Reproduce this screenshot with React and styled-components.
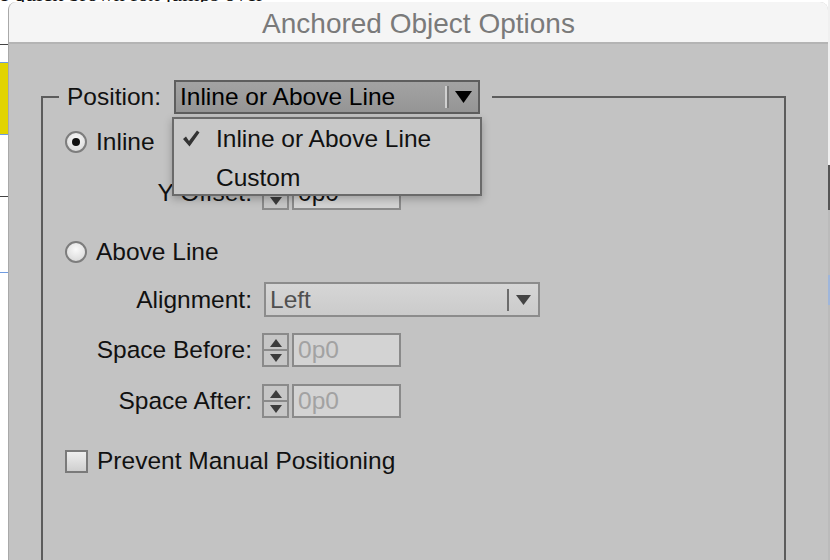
import React from 'react';
import styled, { createGlobalStyle } from 'styled-components';

const GlobalStyle = createGlobalStyle`
  html, body {
    margin: 0;
    padding: 0;
    background: #ffffff;
    overflow: hidden;
  }
  body {
    font-family: "Liberation Sans", Arial, sans-serif;
  }
`;

// Document behind the dialog
const Desktop = styled.div`
  position: relative;
  width: 830px;
  height: 560px;
  overflow: hidden;
  background: #ffffff;
`;

const DocText = styled.div`
  position: absolute;
  top: -19px;
  left: -12px;
  font-family: "Liberation Serif", "Times New Roman", serif;
  font-size: 22px;
  color: #111;
  white-space: nowrap;
`;

const DocSide = styled.div`
  position: absolute;
  left: -14px;
  top: 150px;
  font-family: "Liberation Serif", "Times New Roman", serif;
  font-size: 22px;
  color: #111;
`;

const Highlight = styled.div`
  position: absolute;
  left: 0;
  top: 62px;
  width: 8px;
  height: 71px;
  background: #e2d400;
  border-top: 1px solid #6f9be0;
  border-bottom: 1px solid #6f9be0;
`;

const GuideLine = styled.div`
  position: absolute;
  left: 0;
  top: ${(p) => p.$top}px;
  width: 8px;
  height: 1px;
  background: ${(p) => p.$color || '#6f9be0'};
`;

const RightEdge = styled.div`
  position: absolute;
  right: 0;
  top: 0;
  width: 2px;
  height: 560px;
  background: linear-gradient(#f0f0f0 0 165px, #555 165px 210px, #bbb 210px 275px, #9fb6db 275px 305px, #bbb 305px 560px);
`;

// Dialog window
const Window = styled.div`
  position: absolute;
  left: 8px;
  top: 2px;
  width: 820px;
  height: 600px;
  background: #c3c3c3;
  border-radius: 8px 8px 0 0;
  border-left: 1px solid #a9a9a9;
  box-sizing: border-box;
  overflow: hidden;
  display: flex;
  flex-direction: column;
`;

const TitleBar = styled.div`
  flex: none;
  box-sizing: border-box;
  height: 42px;
  background: #f5f5f5;
  border-bottom: 2px solid #b4b4b4;
  display: flex;
  align-items: center;
  justify-content: center;
  font-size: 28px;
  color: #7a7a7a;
  padding-top: 4px;
`;

const Body = styled.div`
  padding: 36px 0 0 32px;
`;

const Group = styled.fieldset`
  margin: 0;
  padding: 0;
  width: 745px;
  min-height: 520px;
  border: 2px solid #5c5c5c;
  box-sizing: border-box;
`;

const Legend = styled.legend`
  margin-left: 16px;
  padding: 0 12px 0 8px;
  display: flex;
  align-items: center;
  gap: 13px;
`;

const Label = styled.span`
  font-size: 24.5px;
  color: #111;
  white-space: nowrap;
`;

const SelectWrap = styled.div`
  position: relative;
`;

const Select = styled.div`
  width: ${(p) => p.$w}px;
  height: ${(p) => p.$h}px;
  box-sizing: border-box;
  border: 2px solid ${(p) => (p.$open ? '#5e5e5e' : '#8c8c8c')};
  background: ${(p) =>
    p.$open ? 'linear-gradient(#a3a3a3, #959595)' : 'linear-gradient(#d6d6d6, #cbcbcb)'};
  display: flex;
  align-items: center;
  padding-left: 4px;
  font-size: 24.5px;
  color: ${(p) => (p.$open ? '#000' : '#505050')};
`;

const SelectText = styled.span`
  flex: 1;
  white-space: nowrap;
`;

const Divider = styled.span`
  width: ${(p) => (p.$double ? 4 : 2)}px;
  height: 22px;
  border-left: 2px solid ${(p) => (p.$double ? '#d0d0d0' : '#6c6c6c')};
  border-right: ${(p) => (p.$double ? '2px solid #7a7a7a' : 'none')};
  box-sizing: border-box;
  margin-right: 6px;
`;

const Arrow = styled.svg`
  width: 17px;
  height: 12px;
  margin-right: 6px;
`;

const Menu = styled.div`
  position: absolute;
  left: -2px;
  top: 37px;
  width: 310px;
  height: 79px;
  box-sizing: border-box;
  background: #c8c8c8;
  border: 2px solid #6a6a6a;
  box-shadow: 0 3px 8px rgba(0, 0, 0, 0.25);
  z-index: 5;
`;

const MenuItem = styled.div`
  height: 39px;
  display: flex;
  align-items: center;
  font-size: 24.5px;
  color: #111;
`;

const CheckSlot = styled.span`
  width: 42px;
  display: flex;
  justify-content: flex-end;
  padding-right: 16px;
  box-sizing: border-box;
`;

const Content = styled.div`
  display: flex;
  flex-direction: column;
  padding-left: 22px;
`;

const OptionRow = styled.label`
  display: flex;
  align-items: center;
  gap: 9px;
  height: 28px;
  margin-top: ${(p) => p.$mt}px;
  font-size: 24.5px;
  color: #111;
`;

const Radio = styled.span`
  width: 22px;
  height: 22px;
  border-radius: 50%;
  box-sizing: border-box;
  border: 2px solid #7d7d7d;
  background: radial-gradient(circle at 50% 35%, #fafafa, #d4d4d4);
  display: flex;
  align-items: center;
  justify-content: center;
  &::after {
    content: '';
    width: 8px;
    height: 8px;
    border-radius: 50%;
    background: #111;
    display: ${(p) => (p.$checked ? 'block' : 'none')};
  }
`;

const Checkbox = styled.span`
  width: 23px;
  height: 23px;
  box-sizing: border-box;
  border: 2px solid #7a7a7a;
  background: linear-gradient(#eeeeee, #cfcfcf);
`;

const FieldRow = styled.div`
  display: grid;
  grid-template-columns: 187px auto;
  column-gap: 10px;
  align-items: center;
  margin-top: ${(p) => p.$mt}px;
  font-size: 24.5px;
`;

const FieldLabel = styled.span`
  text-align: right;
  color: #111;
  white-space: nowrap;
`;

const Controls = styled.div`
  display: flex;
  gap: 3px;
  align-items: center;
`;

const Stepper = styled.div`
  width: 27px;
  height: 34px;
  box-sizing: border-box;
  border: 2px solid #8a8a8a;
  background: #c6c6c6;
  display: flex;
  flex-direction: column;
  align-items: center;
  justify-content: space-around;
  position: relative;
  &::after {
    content: '';
    position: absolute;
    left: 0;
    right: 0;
    top: 14px;
    height: 2px;
    background: #8a8a8a;
  }
`;

const NumInput = styled.div`
  width: 109px;
  height: 34px;
  box-sizing: border-box;
  border: 2px solid #8a8a8a;
  background: #d3d3d3;
  padding-left: 4px;
  display: flex;
  align-items: center;
  font-size: 24.5px;
  color: ${(p) => (p.$enabled ? '#111' : '#a2a2a2')};
`;

const AlignSelectWrap = styled.div`
  margin-left: 2px;
`;

const Triangle = ({ up, color = '#3c3c3c' }) => (
  <svg width="12" height="8" viewBox="0 0 12 8">
    <path d={up ? 'M6 0 L12 8 L0 8 Z' : 'M0 0 L12 0 L6 8 Z'} fill={color} />
  </svg>
);

const StepperBox = () => (
  <Stepper>
    <Triangle up />
    <Triangle />
  </Stepper>
);

const NumberField = ({ label, mt, enabled }) => (
  <FieldRow $mt={mt}>
    <FieldLabel>{label}</FieldLabel>
    <Controls>
      <StepperBox />
      <NumInput $enabled={enabled}>0p0</NumInput>
    </Controls>
  </FieldRow>
);

const App = () => {
  return (
    <>
      <GlobalStyle />
      <Desktop>
        <DocText>he quick brown fox jumps over</DocText>
        <DocSide>e</DocSide>
        <Highlight />
        <GuideLine $top={272} />
        <GuideLine $top={44} $color="#444" />
        <GuideLine $top={196} $color="#444" />
        <RightEdge />

        <Window>
          <TitleBar>Anchored Object Options</TitleBar>
          <Body>
            <Group>
              <Legend>
                <Label>Position:</Label>
                <SelectWrap>
                  <Select $w={306} $h={34} $open>
                    <SelectText>Inline or Above Line</SelectText>
                    <Divider $double />
                    <Arrow viewBox="0 0 17 12">
                      <path d="M0 0 L17 0 L8.5 12 Z" fill="#000" />
                    </Arrow>
                  </Select>
                  <Menu>
                    <MenuItem>
                      <CheckSlot>
                        <svg width="18" height="17" viewBox="0 0 18 17">
                          <path d="M1 9 L4 6.5 L7 11 L15 0.5 L17.5 2.5 L7.5 16.5 Z" fill="#333" />
                        </svg>
                      </CheckSlot>
                      Inline or Above Line
                    </MenuItem>
                    <MenuItem>
                      <CheckSlot />
                      Custom
                    </MenuItem>
                  </Menu>
                </SelectWrap>
              </Legend>

              <Content>
                <OptionRow $mt={14}>
                  <Radio $checked />
                  Inline
                </OptionRow>

                <NumberField label="Y Offset:" mt={20} enabled />

                <OptionRow $mt={28}>
                  <Radio />
                  Above Line
                </OptionRow>

                <FieldRow $mt={16}>
                  <FieldLabel>Alignment:</FieldLabel>
                  <AlignSelectWrap>
                    <Select $w={276} $h={35}>
                      <SelectText>Left</SelectText>
                      <Divider />
                      <Arrow viewBox="0 0 17 12">
                        <path d="M1 1 L16 1 L8.5 11 Z" fill="#444" />
                      </Arrow>
                    </Select>
                  </AlignSelectWrap>
                </FieldRow>

                <NumberField label="Space Before:" mt={16} />
                <NumberField label="Space After:" mt={17} />

                <OptionRow $mt={29}>
                  <Checkbox />
                  Prevent Manual Positioning
                </OptionRow>
              </Content>
            </Group>
          </Body>
        </Window>
      </Desktop>
    </>
  );
};

export default App;
